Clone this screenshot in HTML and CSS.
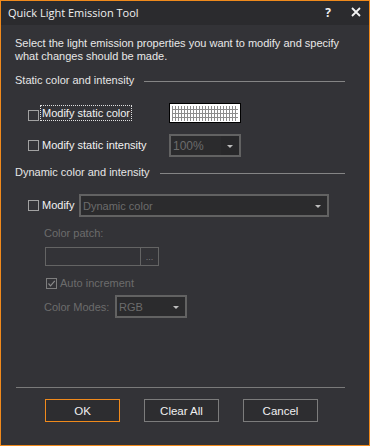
FILE: index.html
```html
<!DOCTYPE html>
<html>
<head>
<meta charset="utf-8">
<link rel="stylesheet" href="styles.css">
</head>
<body>
<div class="dialog">
  <div class="titlebar">
    <span class="title">Quick Light Emission Tool</span>
    <span class="help">?</span>
    <svg class="close" width="10" height="10" viewBox="0 0 10 10"><path d="M1 1 L9 9 M9 1 L1 9" stroke="#f4f4f4" stroke-width="1.8"/></svg>
  </div>
  <div class="content">
    <p class="desc">Select the light emission properties you want to modify and specify what changes should be made.</p>

    <div class="section"><span>Static color and intensity</span><span class="rule"></span></div>
    <div class="row row-color">
      <span class="check"></span>
      <span class="label-col"><span class="label focus">Modify static color</span></span>
      <span class="swatch"><span class="swatch-grid"></span></span>
    </div>
    <div class="row row-int">
      <span class="check"></span>
      <span class="label-col"><span class="label">Modify static intensity</span></span>
      <span class="combo combo-int"><span class="combo-text">100%</span><span class="combo-btn"><span class="arrow"></span></span></span>
    </div>

    <div class="section sec2"><span>Dynamic color and intensity</span><span class="rule"></span></div>
    <div class="row row-dyn">
      <span class="check"></span>
      <span class="label dyn-label">Modify</span>
      <span class="combo combo-dyn"><span class="combo-text">Dynamic color</span><span class="arrow"></span></span>
    </div>
    <div class="sub">
      <div class="dis patch-label">Color patch:</div>
      <div class="patch"><span class="patch-box"></span><span class="patch-btn">...</span></div>
      <div class="auto"><span class="check checked"><svg width="9" height="9" viewBox="0 0 9 9"><path d="M1.5 4.5 L3.5 6.8 L7.8 1.8" fill="none" stroke="#8a8a8a" stroke-width="1.2"/></svg></span><span class="dis">Auto increment</span></div>
      <div class="modes"><span class="dis modes-label">Color Modes:</span><span class="combo combo-rgb"><span class="combo-text">RGB</span><span class="arrow"></span></span></div>
    </div>

    <div class="sep"></div>
    <div class="buttons">
      <span class="btn btn-ok">OK</span>
      <span class="btn">Clear All</span>
      <span class="btn">Cancel</span>
    </div>
  </div>
</div>
</body>
</html>
```

FILE: styles.css
```css
html, body {
  margin: 0;
  padding: 0;
  background: #333337;
}
.dialog {
  box-sizing: border-box;
  width: 370px;
  height: 446px;
  border: 1px solid #f08a1c;
  background: #333337;
  display: flex;
  flex-direction: column;
  font-family: "Liberation Sans", Arial, sans-serif;
  font-size: 11px;
  color: #e6e6e6;
}
.titlebar {
  height: 24px;
  background: #2b2b2e;
  display: flex;
  align-items: center;
  padding-left: 7px;
  flex: none;
}
.title {
  font-family: "Open Sans", "Noto Sans", sans-serif;
  font-size: 11px;
  color: #f1f1f1;
  flex: 1;
  position: relative;
  top: -1px;
}
.help {
  font-family: "Open Sans", sans-serif;
  font-weight: bold;
  font-size: 12px;
  color: #f1f1f1;
  margin-right: 20px;
  position: relative;
  top: -1px;
}
.close {
  margin-right: 8px;
  position: relative;
  top: -1px;
}
.content {
  flex: 1;
  display: flex;
  flex-direction: column;
  padding: 12px 24px 0 14px;
}
.desc {
  margin: 0;
  line-height: 13px;
  color: #e8e8e8;
  width: 330px;
}
.section {
  display: flex;
  align-items: center;
  line-height: 13px;
  margin-top: 11px;
  color: #e6e6e6;
}
.sec2 {
  margin-top: 9px;
}
.rule {
  flex: 1;
  height: 1px;
  background: #858585;
  margin-left: 10px;
  margin-top: 1px;
}
.row {
  display: flex;
  align-items: center;
  padding-left: 13px;
}
.row-color {
  margin-top: 16px;
  height: 20px;
}
.row-int {
  margin-top: 11px;
  height: 23px;
}
.check {
  box-sizing: border-box;
  width: 11px;
  height: 11px;
  border: 1px solid #a2a2a2;
  flex: none;
  display: inline-flex;
  align-items: center;
  justify-content: center;
}
.row-color .check {
  position: relative;
  top: 2px;
}
.label-col {
  box-sizing: border-box;
  width: 130px;
  flex: none;
  padding-left: 2px;
}
.label {
  color: #f2f2f2;
  line-height: 13px;
  padding: 1px;
}
.focus {
  outline: 1px dotted #e0e0e0;
  outline-offset: 0;
}
.swatch {
  box-sizing: border-box;
  width: 72px;
  height: 20px;
  border: 1px solid #000;
  background: #fff;
  padding: 2px 2px 1px 2px;
  display: flex;
}
.swatch-grid {
  flex: 1;
  background-color: #fff;
  background-image:
    repeating-linear-gradient(to right, #8c8c8c 0, #8c8c8c 1px, transparent 1px, transparent 3px),
    repeating-linear-gradient(to bottom, transparent 0, transparent 3px, #8c8c8c 3px, #8c8c8c 4px);
}
.combo {
  box-sizing: border-box;
  border: 2px solid #626262;
  background: #2b2b2d;
  display: flex;
  align-items: center;
  height: 23px;
  color: #6c6c6c;
}
.combo-text {
  flex: 1;
  padding-left: 2px;
}
.combo-int {
  width: 72px;
  font-size: 12px;
}
.combo-btn {
  width: 18px;
  height: 100%;
  background: #28282a;
  display: flex;
  align-items: center;
  justify-content: center;
}
.arrow {
  width: 0;
  height: 0;
  border-left: 3px solid transparent;
  border-right: 3px solid transparent;
  border-top: 3px solid #bdbdbd;
  margin-top: 2px;
}
.combo-dyn .arrow, .combo-rgb .arrow {
  margin-right: 6px;
}
.row-dyn {
  margin-top: 15px;
  height: 23px;
}
.dyn-label {
  margin-left: 2px;
  width: 36px;
  padding-left: 1px;
}
.combo-dyn {
  width: 250px;
}
.sub {
  padding-left: 29px;
}
.dis {
  color: #6c6c6c;
  white-space: nowrap;
}
.patch-label {
  margin-top: 10px;
  line-height: 13px;
}
.patch {
  margin-top: 7px;
  display: flex;
  margin-left: 1px;
  height: 19px;
}
.patch-box {
  box-sizing: border-box;
  width: 96px;
  height: 19px;
  border: 1px solid #646464;
  background: #333337;
}
.patch-btn {
  box-sizing: border-box;
  width: 18px;
  height: 19px;
  border: 1px solid #646464;
  border-left: none;
  color: #7a7a7a;
  font-size: 9px;
  text-align: center;
  line-height: 19px;
}
.auto {
  display: flex;
  align-items: center;
  margin-top: 11px;
  margin-left: 2px;
  line-height: 13px;
}
.check.checked {
  border-color: #7e7e7e;
  margin-right: 3px;
}
.modes {
  display: flex;
  align-items: center;
  margin-top: 5px;
}
.modes-label {
  width: 71px;
  flex: none;
}
.combo-rgb {
  width: 72px;
}
.sep {
  margin-top: auto;
  height: 1px;
  background: #7a7a7a;
  margin-left: 1px;
}
.buttons {
  display: flex;
  gap: 24px;
  margin: 11px 0 23px 30px;
}
.btn {
  box-sizing: border-box;
  width: 75px;
  height: 23px;
  border: 1px solid #7c7c7c;
  background: #2d2d30;
  color: #f0f0f0;
  font-size: 11.5px;
  display: flex;
  align-items: center;
  justify-content: center;
}
.btn-ok {
  border-color: #f08a1c;
}
```
